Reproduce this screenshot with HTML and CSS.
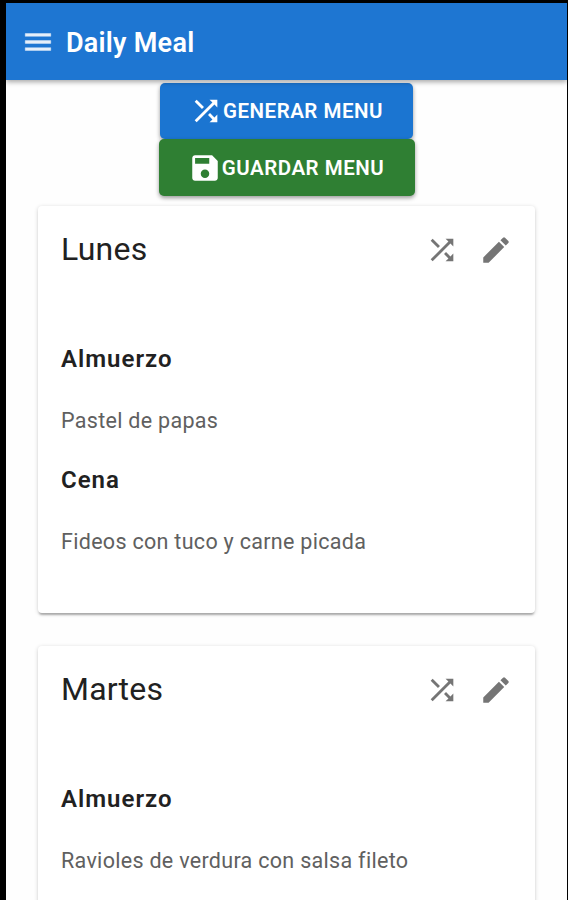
FILE: index.html
```html
<!DOCTYPE html>
<html lang="es">
<head>
<meta charset="utf-8">
<title>Daily Meal</title>
<link rel="stylesheet" href="styles.css">
</head>
<body>
<svg class="defs" aria-hidden="true">
  <symbol id="shuffle" viewBox="0 0 24 24"><path d="M10.59 9.17 5.41 4 4 5.41l5.17 5.17zM14.5 4l2.04 2.04L4 18.59 5.41 20 17.96 7.46 20 9.5V4zm.33 9.41-1.41 1.41 3.13 3.13L14.5 20H20v-5.5l-2.04 2.04z"/></symbol>
  <symbol id="edit" viewBox="0 0 24 24"><path d="M3 17.25V21h3.75L17.81 9.94l-3.75-3.75zM20.71 7.04c.39-.39.39-1.02 0-1.41l-2.34-2.34a.996.996 0 0 0-1.41 0l-1.83 1.83 3.75 3.75z"/></symbol>
  <symbol id="save" viewBox="0 0 24 24"><path d="M17 3H5c-1.11 0-2 .9-2 2v14c0 1.1.89 2 2 2h14c1.1 0 2-.9 2-2V7zm-5 16c-1.66 0-3-1.34-3-3s1.34-3 3-3 3 1.34 3 3-1.34 3-3 3m3-10H5V5h10z"/></symbol>
  <symbol id="menu" viewBox="0 0 24 24"><path d="M3 18h18v-2H3zm0-5h18v-2H3zm0-7v2h18V6z"/></symbol>
</svg>
<div class="app">
  <header class="bar">
    <svg class="icon menu-icon"><use href="#menu"/></svg>
    <h1 class="brand">Daily Meal</h1>
  </header>
  <main class="content">
    <div class="actions">
      <button class="btn generate"><svg class="icon"><use href="#shuffle"/></svg><span class="label">GENERAR MENU</span></button>
      <button class="btn save"><svg class="icon"><use href="#save"/></svg><span class="label">GUARDAR MENU</span></button>
    </div>
    <section class="card">
      <div class="card-head">
        <h2 class="day">Lunes</h2>
        <svg class="icon tool"><use href="#shuffle"/></svg>
        <svg class="icon tool"><use href="#edit"/></svg>
      </div>
      <h3 class="meal">Almuerzo</h3>
      <p class="dish">Pastel de papas</p>
      <h3 class="meal">Cena</h3>
      <p class="dish">Fideos con tuco y carne picada</p>
    </section>
    <section class="card">
      <div class="card-head">
        <h2 class="day">Martes</h2>
        <svg class="icon tool"><use href="#shuffle"/></svg>
        <svg class="icon tool"><use href="#edit"/></svg>
      </div>
      <h3 class="meal">Almuerzo</h3>
      <p class="dish">Ravioles de verdura con salsa fileto</p>
    </section>
  </main>
</div>
</body>
</html>
```
FILE: styles.css
```css
* { box-sizing: border-box; }
body {
  margin: 0;
  height: 900px;
  overflow: hidden;
  background: #000;
  font-family: Roboto, sans-serif;
  color: #212121;
}
h1, h2, h3, p { margin: 0; }
.defs { display: none; }
.icon { width: 34px; height: 34px; fill: currentColor; flex: none; }
.app {
  height: 900px;
  padding: 3px 1px 0 6px;
  display: flex;
  flex-direction: column;
}
.bar {
  height: 77px;
  flex: none;
  padding: 2px 0 0 15px;
  display: flex;
  align-items: center;
  background: #1e76d2;
  color: #fff;
  box-shadow: 0 2px 5px rgba(0, 0, 0, .35);
  z-index: 1;
}
.menu-icon { color: #e6effa; margin-bottom: 2px; stroke: currentColor; stroke-width: .3; }
.brand { margin-left: 11px; font-size: 27px; font-weight: 600; line-height: 40px; letter-spacing: .25px; }
.content {
  flex: 1;
  min-height: 0;
  overflow: hidden;
  padding: 3px 32px 0;
  background: #fefefe;
}
.actions { display: flex; flex-direction: column; align-items: center; margin-bottom: 10px; }
.btn {
  height: 56px;
  border: 0;
  border-radius: 5px;
  padding: 0;
  display: flex;
  align-items: center;
  justify-content: center;
  color: #fff;
  font: 600 20.5px/36px Roboto, sans-serif;
  letter-spacing: .5px;
  box-shadow: 0 2px 4px rgba(0, 0, 0, .4);
}
.btn .icon { margin-left: -1px; }
.generate { width: 253px; background: #1b75d1; }
.save { width: 256px; height: 57px; background: #2f7f33; z-index: 1; }
.card {
  height: 407px;
  margin-bottom: 33px;
  padding: 0 22px 0 23px;
  background: #fff;
  border-radius: 4px;
  box-shadow: 0 3px 2px -1px rgba(0, 0, 0, .25), 0 1px 4px rgba(0, 0, 0, .18);
}
.card-head { height: 87px; display: flex; align-items: center; margin-bottom: 36px; }
.day { flex: 1; font-size: 32px; font-weight: 400; line-height: 45px; padding-bottom: 1px; letter-spacing: .2px; }
.tool { color: #757575; margin-left: 20px; }
.meal { font-size: 24px; font-weight: 600; line-height: 61px; height: 60.7px; letter-spacing: 1px; }
.dish { font-size: 21.5px; line-height: 61px; height: 60.7px; letter-spacing: .3px; color: #606060; }
```
